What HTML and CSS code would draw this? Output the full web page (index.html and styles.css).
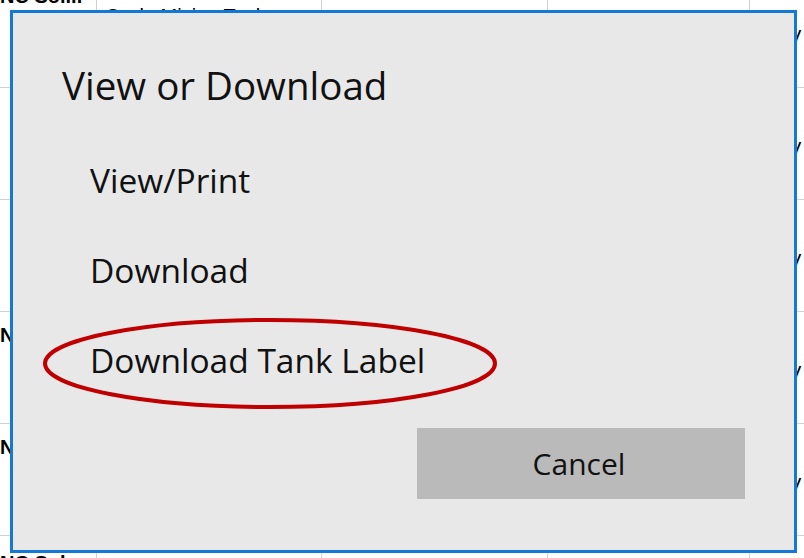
FILE: index.html
```html
<!DOCTYPE html>
<html lang="en">
<head>
<meta charset="utf-8">
<title>View or Download</title>
<link rel="stylesheet" href="styles.css">
</head>
<body>
<div class="sheet">
  <div class="cell c0 top"><span class="bold">NC Sol...</span></div>
  <div class="cell c1"><span class="t1">Cycle Mixing Tank</span></div>
  <div class="cell"></div>
  <div class="cell"></div>
  <div class="cell c4"><span class="v">V</span></div>

  <div class="cell c0"></div>
  <div class="cell c1"></div>
  <div class="cell"></div>
  <div class="cell"></div>
  <div class="cell c4"><span class="v">V</span></div>

  <div class="cell c0"></div>
  <div class="cell c1"></div>
  <div class="cell"></div>
  <div class="cell"></div>
  <div class="cell c4"><span class="v">V</span></div>

  <div class="cell c0"><span class="bold">N</span></div>
  <div class="cell c1"></div>
  <div class="cell"></div>
  <div class="cell"></div>
  <div class="cell c4"><span class="v">V</span></div>

  <div class="cell c0"><span class="bold">N</span></div>
  <div class="cell c1"></div>
  <div class="cell"></div>
  <div class="cell"></div>
  <div class="cell c4"><span class="v">V</span></div>

  <div class="cell c0 last"><span class="bold">NC Sol</span></div>
  <div class="cell c1"></div>
  <div class="cell"></div>
  <div class="cell"></div>
  <div class="cell c4"></div>
</div>

<div class="dialog">
  <div class="title">View or Download</div>
  <div class="items">
    <div class="item">View/Print</div>
    <div class="item">Download</div>
    <div class="item">Download Tank Label</div>
  </div>
  <div class="actions">
    <button class="cancel">Cancel</button>
  </div>
  <svg class="circle" width="454" height="91" viewBox="0 0 454 91">
    <ellipse cx="227" cy="45.5" rx="225" ry="43.5" fill="none" stroke="#c00000" stroke-width="4"/>
  </svg>
</div>
</body>
</html>
```

FILE: styles.css
```css
html, body {
  margin: 0;
  padding: 0;
  width: 804px;
  height: 558px;
  overflow: hidden;
  background: #ffffff;
  font-family: "Open Sans", "Noto Sans", sans-serif;
}

.sheet {
  display: grid;
  grid-template-columns: 97px 225px 226px 202px 54px;
  grid-auto-rows: 112px;
  height: 582px;
  overflow: hidden;
  margin-top: -24px;
  font-family: "Liberation Sans", Arial, sans-serif;
  font-size: 20px;
  color: #000;
}

.cell {
  border-right: 1px solid #d2d2d2;
  border-bottom: 1px solid #d2d2d2;
  overflow: hidden;
  white-space: nowrap;
}

.c0 {
  padding-top: 12px;
}

.c0.top {
  padding-top: 9px;
}

.c0.last {
  padding-top: 16px;
}

.bold {
  font-weight: bold;
}

.c1 {
  padding: 29px 0 0 8px;
}

.c4 {
  border-right: none;
  display: flex;
  align-items: center;
  padding-left: 38px;
  padding-top: 12px;
  box-sizing: border-box;
}

.dialog {
  position: absolute;
  left: 10px;
  top: 10px;
  width: 787px;
  height: 543px;
  box-sizing: border-box;
  border: 3px solid #1479d6;
  background: #e8e8e8;
  display: flex;
  flex-direction: column;
  padding: 53px 49px 51px 49px;
  color: #111;
}

.title {
  font-size: 38.5px;
  line-height: 38px;
}

.items {
  margin-top: 59px;
  padding-left: 28px;
  display: flex;
  flex-direction: column;
  gap: 56px;
}

.item {
  font-size: 33.5px;
  line-height: 34px;
}

.actions {
  margin-top: auto;
  display: flex;
  justify-content: flex-end;
}

.cancel {
  width: 328px;
  height: 71px;
  border: none;
  background: #bababa;
  font-family: "Open Sans", "Noto Sans", sans-serif;
  font-size: 30px;
  color: #111;
  padding: 0 4px 0 0;
}

.circle {
  position: absolute;
  left: 30px;
  top: 305px;
}
```
